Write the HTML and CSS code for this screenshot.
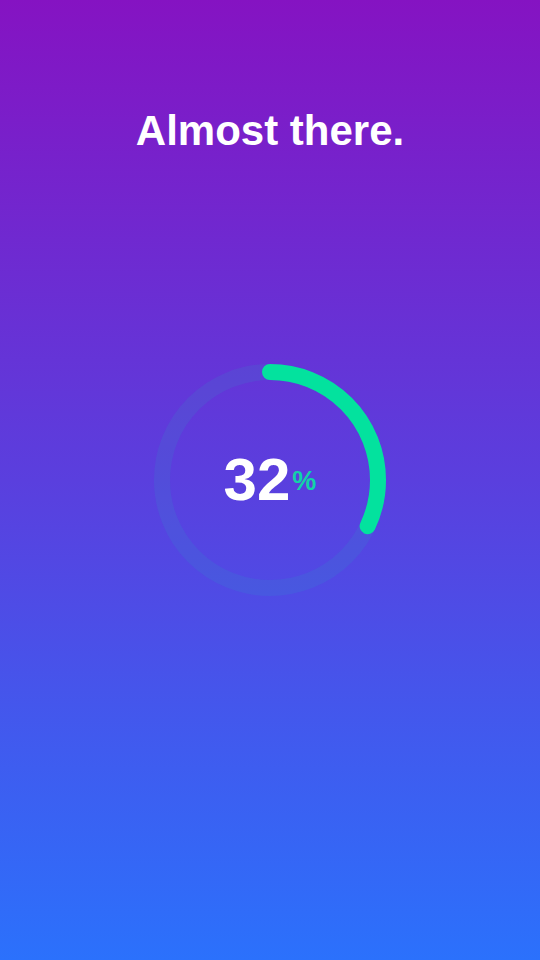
FILE: index.html
```html
<!DOCTYPE html>
<html lang="en">
<head>
<meta charset="utf-8">
<title>Almost there</title>
<link rel="stylesheet" href="styles.css">
</head>
<body>
<main class="screen">
  <h1 class="title">Almost there.</h1>
  <div class="ring">
    <svg class="ring-svg" width="240" height="240" viewBox="0 0 240 240">
      <circle class="track" cx="120" cy="120" r="108"/>
      <circle class="bar" cx="120" cy="120" r="108" style="stroke-dasharray: 217.15 1000"/>
    </svg>
    <div class="value"><span class="num">32</span><span class="pct">%</span></div>
  </div>
</main>
</body>
</html>
```
FILE: styles.css
```css
html, body {
  margin: 0;
  padding: 0;
}
body {
  width: 540px;
  height: 960px;
  overflow: hidden;
  font-family: "Liberation Sans", Arial, sans-serif;
}
.screen {
  box-sizing: border-box;
  width: 540px;
  height: 960px;
  padding-top: 107px;
  display: flex;
  flex-direction: column;
  align-items: center;
  background: linear-gradient(180deg, #8513c2 0%, #5a3fde 50%, #2b71fc 100%);
}
.title {
  margin: 0;
  font-size: 42px;
  line-height: 48px;
  font-weight: 700;
  color: #ffffff;
}
.ring {
  margin-top: 205px;
  width: 240px;
  height: 240px;
  display: grid;
  place-items: center;
}
.ring-svg {
  grid-area: 1 / 1;
  display: block;
  transform: rotate(-90deg);
}
.track {
  fill: none;
  stroke: rgba(20, 210, 190, 0.10);
  stroke-width: 16;
}
.bar {
  fill: none;
  stroke: #03e29e;
  stroke-width: 16;
  stroke-linecap: round;
}
.value {
  grid-area: 1 / 1;
  display: flex;
  align-items: flex-start;
  height: 60px;
  white-space: nowrap;
}
.num {
  font-size: 60px;
  line-height: 60px;
  font-weight: 700;
  color: #ffffff;
}
.pct {
  font-size: 27px;
  line-height: 27px;
  font-weight: 700;
  color: #12d3a8;
  margin-top: 18px;
  margin-left: 2px;
}
```
